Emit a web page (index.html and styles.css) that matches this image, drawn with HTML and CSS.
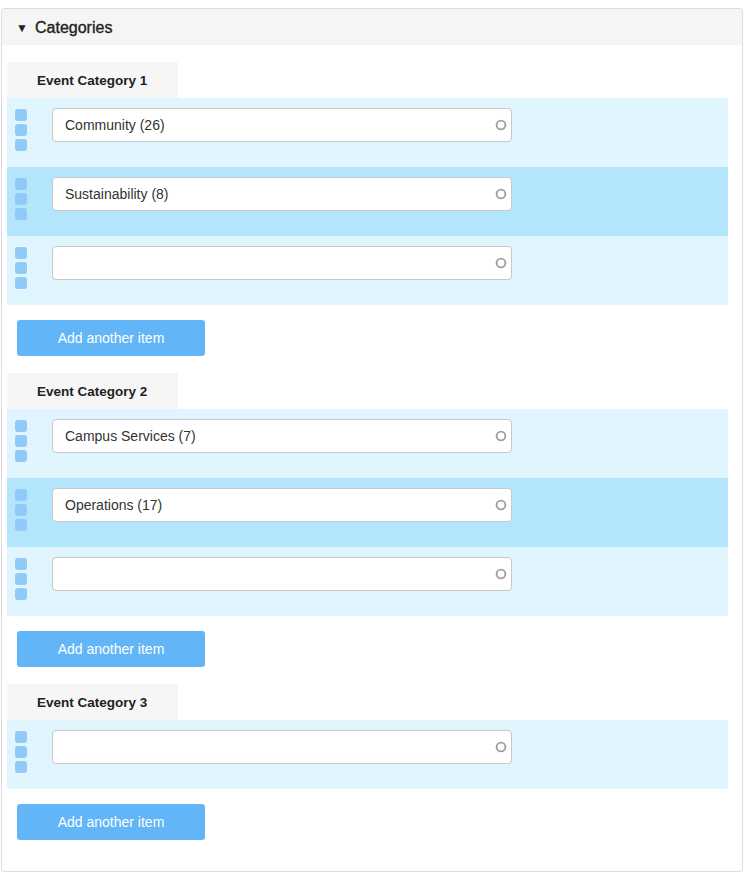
FILE: index.html
```html
<!DOCTYPE html>
<html>
<head>
<meta charset="utf-8">
<link rel="stylesheet" href="styles.css">
</head>
<body>
<div class="panel">
  <div class="panel-head"><span class="caret">&#9660;</span><span class="panel-title">Categories</span></div>
  <div class="panel-body">
    <div class="group">
      <div class="tab">Event Category 1</div>
      <div class="rows">
        <div class="row"><div class="handle"><i></i><i></i><i></i></div><div class="field"><span class="val">Community (26)</span><svg class="ring" viewBox="0 0 12 12"><circle cx="6" cy="6" r="4.4"/></svg></div></div>
        <div class="row dark"><div class="handle"><i></i><i></i><i></i></div><div class="field"><span class="val">Sustainability (8)</span><svg class="ring" viewBox="0 0 12 12"><circle cx="6" cy="6" r="4.4"/></svg></div></div>
        <div class="row"><div class="handle"><i></i><i></i><i></i></div><div class="field"><span class="val"></span><svg class="ring" viewBox="0 0 12 12"><circle cx="6" cy="6" r="4.4"/></svg></div></div>
      </div>
      <button class="add">Add another item</button>
    </div>
    <div class="group">
      <div class="tab">Event Category 2</div>
      <div class="rows">
        <div class="row"><div class="handle"><i></i><i></i><i></i></div><div class="field"><span class="val">Campus Services (7)</span><svg class="ring" viewBox="0 0 12 12"><circle cx="6" cy="6" r="4.4"/></svg></div></div>
        <div class="row dark"><div class="handle"><i></i><i></i><i></i></div><div class="field"><span class="val">Operations (17)</span><svg class="ring" viewBox="0 0 12 12"><circle cx="6" cy="6" r="4.4"/></svg></div></div>
        <div class="row"><div class="handle"><i></i><i></i><i></i></div><div class="field"><span class="val"></span><svg class="ring" viewBox="0 0 12 12"><circle cx="6" cy="6" r="4.4"/></svg></div></div>
      </div>
      <button class="add">Add another item</button>
    </div>
    <div class="group">
      <div class="tab">Event Category 3</div>
      <div class="rows">
        <div class="row"><div class="handle"><i></i><i></i><i></i></div><div class="field"><span class="val"></span><svg class="ring" viewBox="0 0 12 12"><circle cx="6" cy="6" r="4.4"/></svg></div></div>
      </div>
      <button class="add">Add another item</button>
    </div>
  </div>
</div>
</body>
</html>
```
FILE: styles.css
```css
html, body { margin: 0; padding: 0; background: #fff; }
body { padding: 8px 0 0 1px; font-family: "Liberation Sans", Arial, sans-serif; color: #333; }
.panel {
  width: 740px;
  border: 1px solid #dcdcdc;
  border-radius: 4px;
  box-shadow: 0 1px 1px rgba(0,0,0,0.06);
  background: #fff;
}
.panel-head {
  height: 36px;
  background: #f5f5f5;
  border-radius: 3px 3px 0 0;
  display: flex;
  align-items: center;
  padding-left: 14px;
  padding-top: 1px;
  box-sizing: border-box;
}
.caret { font-size: 12px; color: #222; width: 19px; margin-top: 1px; }
.panel-title { font-size: 16px; color: #222; -webkit-text-stroke: 0.35px #222; }
.panel-body { padding: 17px 14px 31px 5px; }
.group + .group { margin-top: 17px; }
.tab {
  width: 141px;
  height: 36px;
  padding-left: 30px;
  background: #f6f6f6;
  display: flex;
  align-items: center;
  font-size: 13.5px;
  font-weight: bold;
  color: #222;
}
.row {
  height: 69px;
  background: #e1f5fe;
  display: flex;
  align-items: flex-start;
  box-sizing: border-box;
  padding-top: 10px;
}
.row.dark { background: #b3e5fc; }
.handle {
  width: 45px;
  padding-left: 8px;
  box-sizing: border-box;
  display: flex;
  flex-direction: column;
  gap: 3px;
  margin-top: 1px;
}
.handle i {
  display: block;
  width: 12px;
  height: 12px;
  border-radius: 3px;
  background: #90caf9;
}
.field {
  width: 460px;
  height: 34px;
  box-sizing: border-box;
  border: 1px solid #c8c8c8;
  border-radius: 4px;
  background: #fff;
  display: flex;
  align-items: center;
  padding: 0 4px 0 12px;
}
.val { flex: 1; font-size: 14px; color: #333; }
.ring {
  width: 12px;
  height: 12px;
  fill: none;
  stroke: #a0a0a0;
  stroke-width: 1.9;
}
.add {
  display: block;
  margin: 15px 0 0 10px;
  width: 188px;
  height: 36px;
  border: none;
  border-radius: 3px;
  background: #62b5f6;
  color: #fff;
  font-family: "Liberation Sans", Arial, sans-serif;
  font-size: 14px;
  padding: 0;
}
```
